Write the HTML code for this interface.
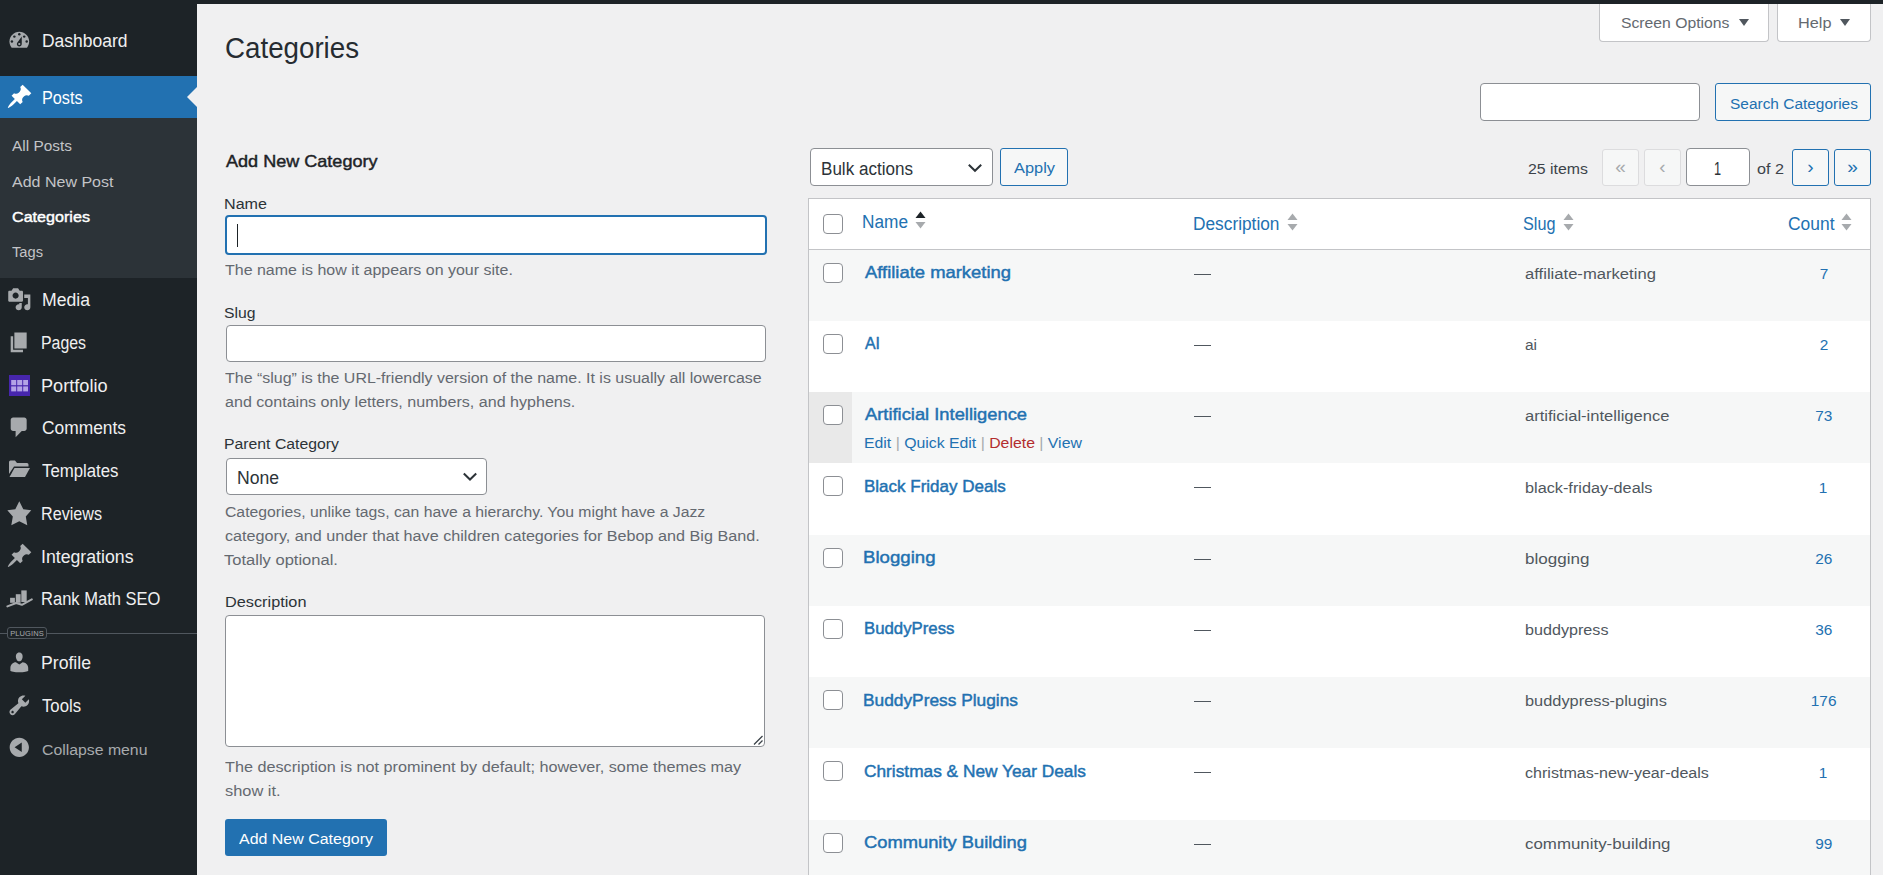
<!DOCTYPE html>
<html><head><meta charset="utf-8"><title>Categories</title>
<style>
html,body{margin:0;padding:0;}
body{width:1883px;height:875px;overflow:hidden;position:relative;background:#f0f0f1;font-family:"Liberation Sans",sans-serif;}
.b{position:absolute;}
.t{position:absolute;white-space:nowrap;transform-origin:0 0;}
</style></head><body>
<div class="b" style="left:197px;top:0px;width:1686px;height:875px;background:#f0f0f1"></div>
<div class="b" style="left:0px;top:0px;width:197px;height:875px;background:#1d2327"></div>
<div class="b" style="left:0px;top:76px;width:197px;height:42px;background:#2271b1"></div>
<div class="b" style="left:0px;top:118px;width:197px;height:160px;background:#2c3338"></div>
<div class="b" style="left:187px;top:87px;width:0;height:0;border-top:10px solid transparent;border-bottom:10px solid transparent;border-right:10px solid #f0f0f1"></div>
<div class="b" style="left:0px;top:633px;width:197px;height:1px;background:#50575e"></div>
<div class="b" style="left:7px;top:627px;width:38px;height:10px;border:1px solid #50575e;border-radius:3px;background:#1d2327;"></div>
<div class="t" style="left:8px;top:628.5px;width:38px;text-align:center;font-size:7.5px;line-height:9px;color:#a7aaad;letter-spacing:0.1px">PLUGINS</div>
<svg class="b" style="left:7px;top:28.00px" width="24.60" height="24.60" viewBox="0 0 20 20"><path d="M3.76 16h12.48C17.34 14.63 18 12.9 18 11c0-4.41-3.58-8-8-8s-8 3.59-8 8c0 1.9.66 3.630 1.76 5z" fill="#a7aaad"/><g fill="#1d2327"><circle cx="10" cy="5" r="1"/><circle cx="6" cy="7" r="1"/><circle cx="14" cy="7" r="1"/><circle cx="4" cy="11" r="1"/><circle cx="16" cy="11" r="1"/><path d="M8.63 11.55L12 7v6c0 1.1-.9 2-2 2s-2-.9-2-2c0-.57.24-1.08.63-1.45z"/></g><circle cx="10" cy="13" r="0.9" fill="#a7aaad"/></svg>
<svg class="b" style="left:6px;top:83.00px" width="27.20" height="27.20" viewBox="0 0 20 20"><path d="M10.44 3.02l1.82-1.82 6.36 6.35-1.83 1.82c-1.050-.68-2.480-.57-3.410.36l-.75.75c-.92.93-1.040 2.350-.35 3.41l-1.830 1.82-2.41-2.41-2.8 2.79c-.42.42-3.38 2.71-3.8 2.29s1.86-3.39 2.28-3.81l2.79-2.79L4.1 9.36l1.83-1.82c1.05.69 2.48.57 3.4-.36l.75-.75c.93-.92 1.05-2.35.36-3.41z" fill="#fff"/></svg>
<svg class="b" style="left:7px;top:287.20px" width="24.60" height="24.60" viewBox="0 0 20 20"><path d="M13 11V4c0-.55-.45-1-1-1h-1.67L9 1H5L3.67 3H2c-.55 0-1 .45-1 1v7c0 .55.45 1 1 1h10c.55 0 1-.45 1-1zM7 4.5c1.38 0 2.5 1.12 2.5 2.5S8.38 9.5 7 9.5 4.5 8.38 4.5 7 5.62 4.5 7 4.5zM14 6h5v10.5c0 1.38-1.12 2.5-2.5 2.5S14 17.880 14 16.5s1.12-2.5 2.5-2.5c.17 0 .34.02.5.05V9h-3V6zm-4 8.05V13h2v3.5c0 1.38-1.12 2.5-2.5 2.5S7 17.88 7 16.5 8.12 14 9.5 14c.17 0 .34.02.5.05z" fill="#a7aaad" fill-rule="evenodd"/></svg>
<svg class="b" style="left:7px;top:329.90px" width="24.60" height="24.60" viewBox="0 0 20 20"><path d="M6 15V2h10v13H6zm-1 1h8v2H3V5h2v11z" fill="#a7aaad"/></svg>
<svg class="b" style="left:9px;top:375px" width="21" height="21" viewBox="0 0 21 21"><rect x="0" y="0" width="21" height="21" fill="#4726ad"/><g fill="#b3a3e6"><rect x="2.2" y="5" width="5" height="5.2"/><rect x="8.2" y="5" width="5" height="5.2"/><rect x="14.2" y="5" width="4.8" height="5.2"/><rect x="2.2" y="11.4" width="5" height="5"/><rect x="8.2" y="11.4" width="5" height="5"/><rect x="14.2" y="11.4" width="4.8" height="5"/></g></svg>
<svg class="b" style="left:7px;top:414.70px" width="24.60" height="24.60" viewBox="0 0 20 20"><path d="M5 2h9c1.1 0 2 .9 2 2v7c0 1.1-.9 2-2 2h-2l-5 5v-5H5c-1.1 0-2-.9-2-2V4c0-1.1.9-2 2-2z" fill="#a7aaad"/></svg>
<svg class="b" style="left:8px;top:459px" width="23" height="19" viewBox="0 0 23 19"><g fill="#a7aaad"><path d="M1,3 Q1,1.5 2.5,1.5 L7,1.5 L9,4 L19,4 Q20.5,4 20.5,5.5 L20.5,7.5 L6,7.5 L1,15 Z"/><path d="M6.5,9 L22,9 L17,18 L1.5,18 Z"/></g></svg>
<svg class="b" style="left:6px;top:500.40px" width="26.60" height="26.60" viewBox="0 0 20 20"><path d="M10 1l3 6 6 .75-4.12 4.62L16 19l-6-3-6 3 1.13-6.63L1 7.75 7 7z" fill="#a7aaad"/></svg>
<svg class="b" style="left:6px;top:541.70px" width="27.20" height="27.20" viewBox="0 0 20 20"><path d="M10.44 3.02l1.82-1.82 6.36 6.35-1.83 1.82c-1.050-.68-2.480-.57-3.410.36l-.75.75c-.92.93-1.040 2.350-.35 3.41l-1.830 1.82-2.41-2.41-2.8 2.79c-.42.42-3.38 2.71-3.8 2.29s1.86-3.39 2.28-3.81l2.79-2.79L4.1 9.36l1.83-1.82c1.05.69 2.48.57 3.4-.36l.75-.75c.93-.92 1.05-2.35.36-3.41z" fill="#a7aaad"/></svg>
<svg class="b" style="left:6px;top:589px" width="27" height="19" viewBox="0 0 27 19"><g fill="#a7aaad"><rect x="4.1" y="8.8" width="4.8" height="5"/><rect x="9.8" y="5.2" width="4.8" height="8.6"/><rect x="15.3" y="1.4" width="5.4" height="11.6"/></g><path d="M1.4,17.4 L10.2,14.0 L15.9,15.8 L25.8,10.4" stroke="#a7aaad" stroke-width="2" fill="none" stroke-linecap="round" stroke-linejoin="round"/></svg>
<svg class="b" style="left:7px;top:649.90px" width="24.60" height="24.60" viewBox="0 0 20 20"><path d="M10 9.25c-2.27 0-2.73-3.44-2.73-3.44C7 4.02 7.82 2 9.97 2c2.16 0 2.98 2.02 2.71 3.81 0 0-.41 3.44-2.68 3.44zm0 2.57L12.72 10c2.39 0 4.52 2.33 4.52 4.53v2.49s-3.65 1.13-7.24 1.13c-3.65 0-7.24-1.13-7.24-1.13v-2.49c0-2.25 1.94-4.48 4.47-4.48z" fill="#a7aaad"/></svg>
<svg class="b" style="left:7px;top:692.90px" width="24.60" height="24.60" viewBox="0 0 20 20"><path d="M16.68 9.77c-1.34 1.34-3.3 1.67-4.95.99l-5.41 6.52c-.99.99-2.59.99-3.58 0s-.99-2.59 0-3.57l6.52-5.42c-.68-1.65-.35-3.61.99-4.950 1.28-1.28 3.12-1.62 4.72-1.06l-2.89 2.89 2.82 2.82 2.86-2.87c.53 1.58.18 3.39-1.08 4.650zM3.81 16.21c.4.39 1.04.39 1.43 0 .4-.4.4-1.04 0-1.43-.39-.4-1.03-.4-1.43 0-.39.39-.39 1.03 0 1.43z" fill="#a7aaad" fill-rule="evenodd"/></svg>
<svg class="b" style="left:7px;top:735.20px" width="24.60" height="24.60" viewBox="0 0 20 20"><path d="M10 2.16c4.33 0 7.84 3.51 7.84 7.84s-3.51 7.84-7.84 7.84S2.16 14.33 2.16 10 5.71 2.16 10 2.16zm2 11.72V6.12L6.18 9.97z" fill="#a7aaad" fill-rule="evenodd"/></svg>
<div class="b" style="left:1599px;top:-2px;width:170px;height:44px;background:#fff;border:1px solid #c3c4c7;border-top:0;border-radius:0 0 4px 4px;box-sizing:border-box"></div>
<div class="b" style="left:1777px;top:-2px;width:94px;height:44px;background:#fff;border:1px solid #c3c4c7;border-top:0;border-radius:0 0 4px 4px;box-sizing:border-box"></div>
<div class="b" style="left:197px;top:0px;width:1686px;height:4px;background:#1d2327"></div>
<div class="b" style="left:1738.5px;top:18.5px;width:0;height:0;border-left:5px solid transparent;border-right:5px solid transparent;border-top:7px solid #50575e"></div>
<div class="b" style="left:1839.7px;top:18.5px;width:0;height:0;border-left:5px solid transparent;border-right:5px solid transparent;border-top:7px solid #50575e"></div>
<div class="b" style="left:1480px;top:83px;width:220px;height:38px;background:#fff;border:1px solid #8c8f94;border-radius:4px;box-sizing:border-box"></div>
<div class="b" style="left:1715px;top:83px;width:156px;height:38px;background:#f6f7f7;border:1px solid #2271b1;border-radius:3px;box-sizing:border-box"></div>
<div class="b" style="left:225px;top:215px;width:542px;height:40px;background:#fff;border:2px solid #2271b1;border-radius:4px;box-sizing:border-box"></div>
<div class="b" style="left:237px;top:224px;width:1px;height:23px;background:#1d2327"></div>
<div class="b" style="left:226px;top:325px;width:540px;height:37px;background:#fff;border:1px solid #8c8f94;border-radius:4px;box-sizing:border-box"></div>
<div class="b" style="left:226px;top:458px;width:261px;height:37px;background:#fff;border:1px solid #8c8f94;border-radius:4px;box-sizing:border-box"></div>
<svg class="b" style="left:462px;top:471px" width="16" height="12" viewBox="0 0 16 12"><path d="M1.8,2.5 L8,8.5 L14.2,2.5" stroke="#2c3338" stroke-width="2" fill="none"/></svg>
<div class="b" style="left:225px;top:615px;width:540px;height:132px;background:#fff;border:1px solid #8c8f94;border-radius:4px;box-sizing:border-box"></div>
<svg class="b" style="left:752px;top:734px" width="12" height="12" viewBox="0 0 12 12"><path d="M2,10.5 L10.5,2 M6.5,10.5 L10.5,6.5" stroke="#3c434a" stroke-width="1.3"/></svg>
<div class="b" style="left:225px;top:819px;width:162px;height:37px;background:#2271b1;border-radius:3px"></div>
<div class="b" style="left:810px;top:148px;width:183px;height:38px;background:#fff;border:1px solid #8c8f94;border-radius:4px;box-sizing:border-box"></div>
<svg class="b" style="left:967px;top:162px" width="16" height="12" viewBox="0 0 16 12"><path d="M1.8,2.8 L8,8.8 L14.2,2.8" stroke="#2c3338" stroke-width="2" fill="none"/></svg>
<div class="b" style="left:1000px;top:148px;width:68px;height:38px;background:#f6f7f7;border:1px solid #2271b1;border-radius:3px;box-sizing:border-box"></div>
<div class="b" style="left:1602px;top:149px;width:37px;height:37px;background:#f6f7f7;border:1px solid #dcdcde;border-radius:3px;box-sizing:border-box"></div>
<div class="t" style="left:1602px;top:150px;width:37px;text-align:center;font-size:19px;line-height:34px;color:#a7aaad">«</div>
<div class="b" style="left:1644px;top:149px;width:37px;height:37px;background:#f6f7f7;border:1px solid #dcdcde;border-radius:3px;box-sizing:border-box"></div>
<div class="t" style="left:1644px;top:150px;width:37px;text-align:center;font-size:19px;line-height:34px;color:#a7aaad">‹</div>
<div class="b" style="left:1686px;top:148px;width:64px;height:38px;background:#fff;border:1px solid #8c8f94;border-radius:4px;box-sizing:border-box"></div>
<div class="b" style="left:1792px;top:149px;width:37px;height:37px;background:#f6f7f7;border:1px solid #2271b1;border-radius:3px;box-sizing:border-box"></div>
<div class="t" style="left:1792px;top:150px;width:37px;text-align:center;font-size:19px;line-height:34px;color:#2271b1">›</div>
<div class="b" style="left:1834px;top:149px;width:37px;height:37px;background:#f6f7f7;border:1px solid #2271b1;border-radius:3px;box-sizing:border-box"></div>
<div class="t" style="left:1834px;top:150px;width:37px;text-align:center;font-size:19px;line-height:34px;color:#2271b1">»</div>
<div class="b" style="left:808px;top:198px;width:1063px;height:677px;background:#fff;border:1px solid #c3c4c7;border-bottom:0;box-sizing:border-box"></div>
<div class="b" style="left:809px;top:249px;width:1061px;height:1px;background:#c3c4c7"></div>
<div class="b" style="left:823px;top:214px;width:20px;height:20px;background:#fff;border:1px solid #8c8f94;border-radius:4px;box-sizing:border-box"></div>
<svg class="b" style="left:915px;top:211px" width="11" height="19" viewBox="0 0 11 19"><path d="M5.5,0.5 L10.5,7 L0.5,7 Z" fill="#1d2327"/><path d="M0.5,11 L10.5,11 L5.5,17.5 Z" fill="#a7aaad"/></svg>
<svg class="b" style="left:1287px;top:213px" width="11" height="19" viewBox="0 0 11 19"><path d="M5.5,0.5 L10.5,7 L0.5,7 Z" fill="#a7aaad"/><path d="M0.5,11 L10.5,11 L5.5,17.5 Z" fill="#a7aaad"/></svg>
<svg class="b" style="left:1563px;top:213px" width="11" height="19" viewBox="0 0 11 19"><path d="M5.5,0.5 L10.5,7 L0.5,7 Z" fill="#a7aaad"/><path d="M0.5,11 L10.5,11 L5.5,17.5 Z" fill="#a7aaad"/></svg>
<svg class="b" style="left:1841px;top:213px" width="11" height="19" viewBox="0 0 11 19"><path d="M5.5,0.5 L10.5,7 L0.5,7 Z" fill="#a7aaad"/><path d="M0.5,11 L10.5,11 L5.5,17.5 Z" fill="#a7aaad"/></svg>
<div class="b" style="left:809px;top:250px;width:1061px;height:71px;background:#f6f7f7"></div>
<div class="b" style="left:823px;top:263px;width:20px;height:20px;background:#fff;border:1px solid #8c8f94;border-radius:4px;box-sizing:border-box"></div>
<div class="b" style="left:1194px;top:274px;width:17px;height:1px;background:#50575e"></div>
<div class="b" style="left:823px;top:334px;width:20px;height:20px;background:#fff;border:1px solid #8c8f94;border-radius:4px;box-sizing:border-box"></div>
<div class="b" style="left:1194px;top:345px;width:17px;height:1px;background:#50575e"></div>
<div class="b" style="left:809px;top:392px;width:1061px;height:71px;background:#f6f7f7"></div>
<div class="b" style="left:809px;top:392px;width:43px;height:71px;background:#e9e9e9"></div>
<div class="b" style="left:823px;top:405px;width:20px;height:20px;background:#fff;border:1px solid #8c8f94;border-radius:4px;box-sizing:border-box"></div>
<div class="b" style="left:1194px;top:416px;width:17px;height:1px;background:#50575e"></div>
<div class="b" style="left:823px;top:476px;width:20px;height:20px;background:#fff;border:1px solid #8c8f94;border-radius:4px;box-sizing:border-box"></div>
<div class="b" style="left:1194px;top:487px;width:17px;height:1px;background:#50575e"></div>
<div class="b" style="left:809px;top:535px;width:1061px;height:71px;background:#f6f7f7"></div>
<div class="b" style="left:823px;top:548px;width:20px;height:20px;background:#fff;border:1px solid #8c8f94;border-radius:4px;box-sizing:border-box"></div>
<div class="b" style="left:1194px;top:559px;width:17px;height:1px;background:#50575e"></div>
<div class="b" style="left:823px;top:619px;width:20px;height:20px;background:#fff;border:1px solid #8c8f94;border-radius:4px;box-sizing:border-box"></div>
<div class="b" style="left:1194px;top:630px;width:17px;height:1px;background:#50575e"></div>
<div class="b" style="left:809px;top:677px;width:1061px;height:71px;background:#f6f7f7"></div>
<div class="b" style="left:823px;top:690px;width:20px;height:20px;background:#fff;border:1px solid #8c8f94;border-radius:4px;box-sizing:border-box"></div>
<div class="b" style="left:1194px;top:701px;width:17px;height:1px;background:#50575e"></div>
<div class="b" style="left:823px;top:761px;width:20px;height:20px;background:#fff;border:1px solid #8c8f94;border-radius:4px;box-sizing:border-box"></div>
<div class="b" style="left:1194px;top:772px;width:17px;height:1px;background:#50575e"></div>
<div class="b" style="left:809px;top:820px;width:1061px;height:55px;background:#f6f7f7"></div>
<div class="b" style="left:823px;top:833px;width:20px;height:20px;background:#fff;border:1px solid #8c8f94;border-radius:4px;box-sizing:border-box"></div>
<div class="b" style="left:1194px;top:844px;width:17px;height:1px;background:#50575e"></div>
<div class="t" style="left:41.50px;top:33px;font-size:17.6px;line-height:17.6px;color:#f0f0f1;transform:scaleX(0.9934);">Dashboard</div>
<div class="t" style="left:41.50px;top:90px;font-size:17.6px;line-height:17.6px;color:#fff;transform:scaleX(0.9214);">Posts</div>
<div class="t" style="left:42.00px;top:292px;font-size:17.6px;line-height:17.6px;color:#f0f0f1;">Media</div>
<div class="t" style="left:41.00px;top:335px;font-size:17.6px;line-height:17.6px;color:#f0f0f1;transform:scaleX(0.9021);">Pages</div>
<div class="t" style="left:41.00px;top:378px;font-size:17.6px;line-height:17.6px;color:#f0f0f1;transform:scaleX(1.0307);">Portfolio</div>
<div class="t" style="left:42.00px;top:420px;font-size:17.6px;line-height:17.6px;color:#f0f0f1;transform:scaleX(0.9872);">Comments</div>
<div class="t" style="left:42.00px;top:463px;font-size:17.6px;line-height:17.6px;color:#f0f0f1;transform:scaleX(0.9538);">Templates</div>
<div class="t" style="left:41.00px;top:506px;font-size:17.6px;line-height:17.6px;color:#f0f0f1;transform:scaleX(0.9173);">Reviews</div>
<div class="t" style="left:41.00px;top:549px;font-size:17.6px;line-height:17.6px;color:#f0f0f1;transform:scaleX(1.0060);">Integrations</div>
<div class="t" style="left:41.00px;top:591px;font-size:17.6px;line-height:17.6px;color:#f0f0f1;transform:scaleX(0.9398);">Rank Math SEO</div>
<div class="t" style="left:41.00px;top:655px;font-size:17.6px;line-height:17.6px;color:#f0f0f1;transform:scaleX(1.0028);">Profile</div>
<div class="t" style="left:42.00px;top:698px;font-size:17.6px;line-height:17.6px;color:#f0f0f1;transform:scaleX(0.9492);">Tools</div>
<div class="t" style="left:42.00px;top:742px;font-size:15.4px;line-height:15.4px;color:#a7aaad;transform:scaleX(1.0271);">Collapse menu</div>
<div class="t" style="left:12.00px;top:138px;font-size:15.4px;line-height:15.4px;color:#c3c4c7;">All Posts</div>
<div class="t" style="left:12.00px;top:174px;font-size:15.4px;line-height:15.4px;color:#c3c4c7;transform:scaleX(1.0400);">Add New Post</div>
<div class="t" style="left:12.00px;top:209px;font-size:15.4px;line-height:15.4px;color:#fff;-webkit-text-stroke:0.45px #fff;transform:scaleX(1.0477);">Categories</div>
<div class="t" style="left:12.00px;top:244px;font-size:15.4px;line-height:15.4px;color:#c3c4c7;transform:scaleX(0.9529);">Tags</div>
<div class="t" style="left:225.00px;top:34px;font-size:29px;line-height:29px;color:#262c31;transform:scaleX(0.9558);">Categories</div>
<div class="t" style="left:1620.50px;top:15px;font-size:15.4px;line-height:15.4px;color:#646970;transform:scaleX(1.0222);">Screen Options</div>
<div class="t" style="left:1797.50px;top:15px;font-size:15.4px;line-height:15.4px;color:#646970;transform:scaleX(1.0582);">Help</div>
<div class="t" style="left:1729.50px;top:96px;font-size:15.4px;line-height:15.4px;color:#2271b1;transform:scaleX(1.0036);">Search Categories</div>
<div class="t" style="left:225.50px;top:153px;font-size:17.0px;line-height:17.0px;color:#1d2327;-webkit-text-stroke:0.45px #1d2327;transform:scaleX(1.0620);">Add New Category</div>
<div class="t" style="left:224.00px;top:196px;font-size:15.4px;line-height:15.4px;color:#2c3338;transform:scaleX(1.0473);">Name</div>
<div class="t" style="left:225.00px;top:262px;font-size:15.4px;line-height:15.4px;color:#646970;transform:scaleX(1.0384);">The name is how it appears on your site.</div>
<div class="t" style="left:224.00px;top:305px;font-size:15.4px;line-height:15.4px;color:#2c3338;transform:scaleX(1.0224);">Slug</div>
<div class="t" style="left:225.00px;top:370px;font-size:15.4px;line-height:15.4px;color:#646970;transform:scaleX(1.0370);">The “slug” is the URL-friendly version of the name. It is usually all lowercase</div>
<div class="t" style="left:225.00px;top:394px;font-size:15.4px;line-height:15.4px;color:#646970;transform:scaleX(1.0444);">and contains only letters, numbers, and hyphens.</div>
<div class="t" style="left:224.00px;top:436px;font-size:15.4px;line-height:15.4px;color:#2c3338;transform:scaleX(1.0255);">Parent Category</div>
<div class="t" style="left:237.00px;top:470px;font-size:17.6px;line-height:17.6px;color:#2c3338;">None</div>
<div class="t" style="left:225.00px;top:504px;font-size:15.4px;line-height:15.4px;color:#646970;transform:scaleX(1.0230);">Categories, unlike tags, can have a hierarchy. You might have a Jazz</div>
<div class="t" style="left:225.00px;top:528px;font-size:15.4px;line-height:15.4px;color:#646970;transform:scaleX(1.0508);">category, and under that have children categories for Bebop and Big Band.</div>
<div class="t" style="left:224.00px;top:552px;font-size:15.4px;line-height:15.4px;color:#646970;transform:scaleX(1.0741);">Totally optional.</div>
<div class="t" style="left:224.50px;top:594px;font-size:15.4px;line-height:15.4px;color:#2c3338;transform:scaleX(1.0582);">Description</div>
<div class="t" style="left:225.00px;top:759px;font-size:15.4px;line-height:15.4px;color:#646970;transform:scaleX(1.0530);">The description is not prominent by default; however, some themes may</div>
<div class="t" style="left:224.50px;top:783px;font-size:15.4px;line-height:15.4px;color:#646970;transform:scaleX(1.0635);">show it.</div>
<div class="t" style="left:239.00px;top:831px;font-size:15.4px;line-height:15.4px;color:#fff;transform:scaleX(1.0368);">Add New Category</div>
<div class="t" style="left:820.50px;top:161px;font-size:17.6px;line-height:17.6px;color:#2c3338;transform:scaleX(0.9695);">Bulk actions</div>
<div class="t" style="left:1013.50px;top:160px;font-size:15.4px;line-height:15.4px;color:#2271b1;transform:scaleX(1.0642);">Apply</div>
<div class="t" style="left:1528.00px;top:161px;font-size:15.4px;line-height:15.4px;color:#3c434a;transform:scaleX(1.0307);">25 items</div>
<div class="t" style="left:1714.00px;top:161px;font-size:17.6px;line-height:17.6px;color:#2c3338;transform:scaleX(0.7233);">1</div>
<div class="t" style="left:1757.00px;top:161px;font-size:15.4px;line-height:15.4px;color:#3c434a;transform:scaleX(1.0520);">of 2</div>
<div class="t" style="left:861.50px;top:214px;font-size:17.6px;line-height:17.6px;color:#2271b1;transform:scaleX(0.9803);">Name</div>
<div class="t" style="left:1192.50px;top:216px;font-size:17.6px;line-height:17.6px;color:#2271b1;transform:scaleX(0.9827);">Description</div>
<div class="t" style="left:1522.50px;top:216px;font-size:17.6px;line-height:17.6px;color:#2271b1;transform:scaleX(0.9225);">Slug</div>
<div class="t" style="left:1787.50px;top:216px;font-size:17.6px;line-height:17.6px;color:#2271b1;transform:scaleX(0.9905);">Count</div>
<div class="t" style="left:865.00px;top:264px;font-size:17.0px;line-height:17.0px;color:#2271b1;-webkit-text-stroke:0.45px #2271b1;transform:scaleX(1.0831);">Affiliate marketing</div>
<div class="t" style="left:1524.50px;top:266px;font-size:15.4px;line-height:15.4px;color:#50575e;transform:scaleX(1.0802);">affiliate-marketing</div>
<div class="t" style="left:1819.63px;top:266px;font-size:15.4px;line-height:15.4px;color:#2271b1;">7</div>
<div class="t" style="left:865.00px;top:335px;font-size:17.0px;line-height:17.0px;color:#2271b1;-webkit-text-stroke:0.45px #2271b1;transform:scaleX(0.9360);">AI</div>
<div class="t" style="left:1524.50px;top:337px;font-size:15.4px;line-height:15.4px;color:#50575e;transform:scaleX(1.0068);">ai</div>
<div class="t" style="left:1819.63px;top:337px;font-size:15.4px;line-height:15.4px;color:#2271b1;">2</div>
<div class="t" style="left:865.00px;top:406px;font-size:17.0px;line-height:17.0px;color:#2271b1;-webkit-text-stroke:0.45px #2271b1;transform:scaleX(1.0784);">Artificial Intelligence</div>
<div class="t" style="left:1524.50px;top:408px;font-size:15.4px;line-height:15.4px;color:#50575e;transform:scaleX(1.0751);">artificial-intelligence</div>
<div class="t" style="left:1815.17px;top:408px;font-size:15.4px;line-height:15.4px;color:#2271b1;">73</div>
<div class="t" style="left:863.50px;top:435px;font-size:15.4px;line-height:15.4px;color:#2271b1;transform:scaleX(1.0280);">Edit <span style="color:#a7aaad">|</span> Quick Edit <span style="color:#a7aaad">|</span> <span style="color:#b32d2e">Delete</span> <span style="color:#a7aaad">|</span> View</div>
<div class="t" style="left:864.00px;top:478px;font-size:17.0px;line-height:17.0px;color:#2271b1;-webkit-text-stroke:0.45px #2271b1;">Black Friday Deals</div>
<div class="t" style="left:1524.50px;top:480px;font-size:15.4px;line-height:15.4px;color:#50575e;transform:scaleX(1.0564);">black-friday-deals</div>
<div class="t" style="left:1818.63px;top:480px;font-size:15.4px;line-height:15.4px;color:#2271b1;">1</div>
<div class="t" style="left:863.00px;top:549px;font-size:17.0px;line-height:17.0px;color:#2271b1;-webkit-text-stroke:0.45px #2271b1;transform:scaleX(1.0960);">Blogging</div>
<div class="t" style="left:1524.50px;top:551px;font-size:15.4px;line-height:15.4px;color:#50575e;transform:scaleX(1.1073);">blogging</div>
<div class="t" style="left:1815.17px;top:551px;font-size:15.4px;line-height:15.4px;color:#2271b1;">26</div>
<div class="t" style="left:864.00px;top:620px;font-size:17.0px;line-height:17.0px;color:#2271b1;-webkit-text-stroke:0.45px #2271b1;transform:scaleX(0.9872);">BuddyPress</div>
<div class="t" style="left:1524.50px;top:622px;font-size:15.4px;line-height:15.4px;color:#50575e;transform:scaleX(1.0488);">buddypress</div>
<div class="t" style="left:1815.17px;top:622px;font-size:15.4px;line-height:15.4px;color:#2271b1;">36</div>
<div class="t" style="left:863.00px;top:692px;font-size:17.0px;line-height:17.0px;color:#2271b1;-webkit-text-stroke:0.45px #2271b1;transform:scaleX(1.0187);">BuddyPress Plugins</div>
<div class="t" style="left:1524.50px;top:693px;font-size:15.4px;line-height:15.4px;color:#50575e;transform:scaleX(1.0632);">buddypress-plugins</div>
<div class="t" style="left:1810.80px;top:693px;font-size:15.4px;line-height:15.4px;color:#2271b1;">176</div>
<div class="t" style="left:864.00px;top:763px;font-size:17.0px;line-height:17.0px;color:#2271b1;-webkit-text-stroke:0.45px #2271b1;transform:scaleX(1.0170);">Christmas &amp; New Year Deals</div>
<div class="t" style="left:1524.50px;top:765px;font-size:15.4px;line-height:15.4px;color:#50575e;transform:scaleX(1.0437);">christmas-new-year-deals</div>
<div class="t" style="left:1818.63px;top:765px;font-size:15.4px;line-height:15.4px;color:#2271b1;">1</div>
<div class="t" style="left:864.00px;top:834px;font-size:17.0px;line-height:17.0px;color:#2271b1;-webkit-text-stroke:0.45px #2271b1;transform:scaleX(1.0783);">Community Building</div>
<div class="t" style="left:1524.50px;top:836px;font-size:15.4px;line-height:15.4px;color:#50575e;transform:scaleX(1.0967);">community-building</div>
<div class="t" style="left:1815.17px;top:836px;font-size:15.4px;line-height:15.4px;color:#2271b1;">99</div>
</body></html>
